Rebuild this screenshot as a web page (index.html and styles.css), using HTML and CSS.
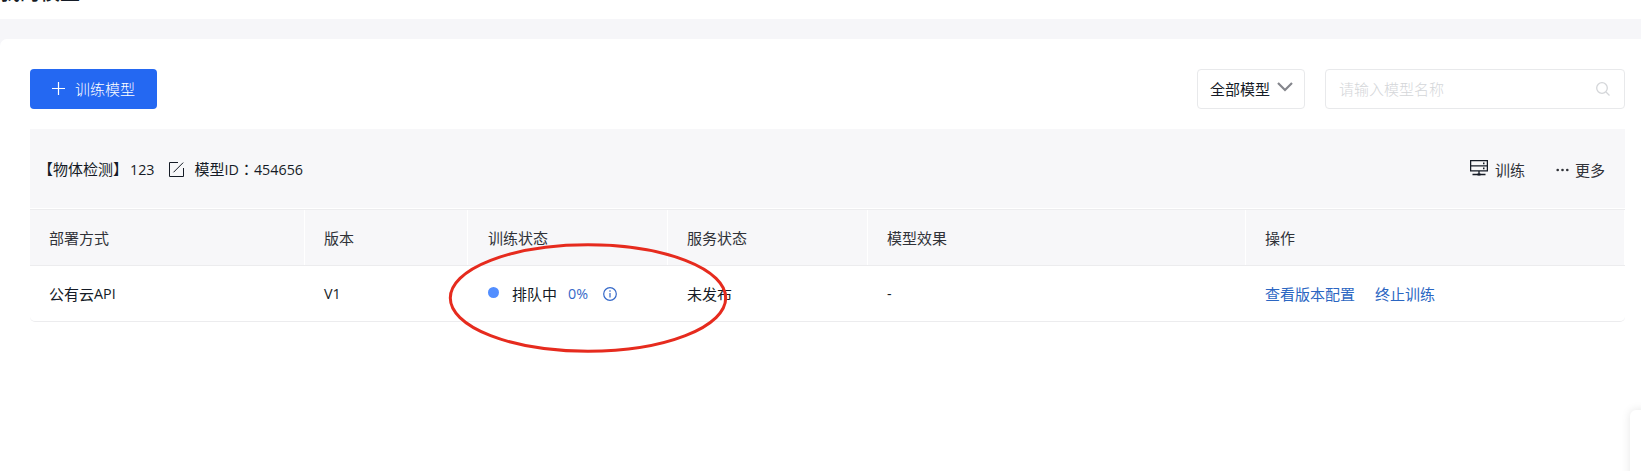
FILE: index.html
```html
<!DOCTYPE html>
<html lang="zh-CN">
<head>
<meta charset="utf-8">
<title>我的模型</title>
<link rel="stylesheet" href="styles.css">
</head>
<body>
<header class="page-header"><h1 class="page-title">我的模型</h1></header>
<main class="card">
  <div class="toolbar">
    <button class="btn-primary">
      <svg width="13" height="13" viewBox="0 0 13 13"><path d="M6.5 0v13M0 6.5h13" stroke="currentColor" stroke-width="1.2"/></svg>
      <span>训练模型</span>
    </button>
    <div class="filters">
      <div class="select">
        <span>全部模型</span>
        <svg class="chevron" width="16" height="10" viewBox="0 0 16 10"><path d="M1 1l7 7 7-7" fill="none" stroke="currentColor" stroke-width="2.2"/></svg>
      </div>
      <div class="search">
        <span>请输入模型名称</span>
        <svg width="14" height="14" viewBox="0 0 14 14" fill="none" stroke="currentColor" stroke-width="1.3"><circle cx="6" cy="6" r="5.3"/><path d="M10 10l3.5 3.5"/></svg>
      </div>
    </div>
  </div>
  <section class="model">
    <div class="model-head">
      <span class="model-name">【物体检测】<span class="latin">123</span></span>
      <svg class="edit" width="15" height="15" viewBox="0 0 15 15" fill="none" stroke="currentColor" stroke-width="1"><path d="M9 .5H.5v14h14V6M4.5 10.3l9.7-9.7"/></svg>
      <span class="model-id">模型<span class="latin">ID</span><span class="colon">：</span><span class="latin">454656</span></span>
      <div class="model-actions">
        <span class="action">
          <svg class="server" width="18" height="17" viewBox="0 0 18 17" fill="none" stroke="currentColor" stroke-width="1.3"><path d="M.6.7h16.8v10.1H.6zM.6 5.9h16.8M9 10.8v3.7M2.5 14.5h13"/><path d="M13 3.3h1.5M13 8.3h1.5M7.5 14.5h3" stroke-width="1.8"/></svg>
          <span>训练</span>
        </span>
        <span class="action more">
          <svg width="13" height="4" viewBox="0 0 13 4" fill="currentColor"><circle cx="1.7" cy="2" r="1.3"/><circle cx="6.5" cy="2" r="1.3"/><circle cx="11.3" cy="2" r="1.3"/></svg>
          <span>更多</span>
        </span>
      </div>
    </div>
    <div class="row row-head">
      <div class="cell">部署方式</div><div class="cell">版本</div><div class="cell">训练状态</div><div class="cell">服务状态</div><div class="cell">模型效果</div><div class="cell">操作</div>
    </div>
    <div class="row row-body">
      <div class="cell">公有云<span class="latin">API</span></div>
      <div class="cell"><span class="latin">V1</span></div>
      <div class="cell status">
        <i class="dot"></i><span>排队中</span><span class="latin percent">0%</span>
        <svg class="info" width="14" height="14" viewBox="0 0 14 14" fill="none" stroke="currentColor" stroke-width="1.2"><circle cx="7" cy="7" r="6.3"/><path d="M7 6v4.5M7 3.3v1.4"/></svg>
        <svg class="marker" width="280" height="112" viewBox="0 0 280 112"><ellipse cx="140" cy="56" rx="137.7" ry="53.2" fill="none" stroke="#e62b1e" stroke-width="3"/></svg>
      </div>
      <div class="cell">未发布</div>
      <div class="cell"><span class="latin">-</span></div>
      <div class="cell links"><a>查看版本配置</a><a>终止训练</a></div>
    </div>
  </section>
</main>
<aside class="float-panel"></aside>
</body>
</html>
```
FILE: styles.css
```css
* { box-sizing: border-box; }
body {
  margin: 0;
  height: 471px;
  overflow: hidden;
  background: #f6f6f9;
  color: #151b26;
  font: 15px/20px "Noto Sans CJK SC", sans-serif;
}
svg { display: block; flex: none; }
.latin { font-family: "Open Sans", sans-serif; font-size: 14.3px; }
.page-header { height: 19px; background: #fff; overflow: hidden; }
.page-title { margin: -19px 0 0; font-size: 20px; line-height: 22px; font-weight: 500; }
.card { margin-top: 20px; height: 432px; padding: 30px 16px 0 30px; background: #fff; border-radius: 7px 0 0 0; }
.toolbar { display: flex; justify-content: space-between; height: 40px; }
.btn-primary {
  display: flex; align-items: center; gap: 10px;
  width: 127px; height: 40px; padding: 0 0 0 22px;
  border: 0; border-radius: 4px; background: #2468f2; color: #fff; font: inherit; font-weight: 300;
}
.btn-primary svg { margin-top: -2px; }
.filters { display: flex; gap: 20px; }
.select, .search { display: flex; align-items: center; height: 40px; border: 1px solid #e8e9eb; border-radius: 4px; background: #fff; }
.select { width: 108px; padding-left: 12px; gap: 7px; }
.chevron { color: #84868c; margin-top: -5px; }
.search { width: 300px; padding: 0 14px 0 13px; justify-content: space-between; color: #d4d6d9; font-weight: 300; }
.model-head { display: flex; align-items: center; height: 79px; margin-top: 20px; padding: 2px 20px 0 8px; background: #f7f7f9; }
.model-name .latin { margin-left: 2px; }
.edit { margin: 0 11px 0 14px; }
.colon { display: inline-block; width: 15px; text-align: center; font-family: "Noto Sans CJK TC", sans-serif; }
.model-actions { display: flex; align-items: center; gap: 31px; margin-left: auto; color: #303238; }
.action { display: flex; align-items: center; gap: 7px; }
.server { margin-top: -3px; color: #151b26; }
.more { gap: 6px; }
.row { display: grid; grid-template-columns: 275px 163px 200px 200px 378px 1fr; }
.row-head { height: 57px; margin-top: 1px; border: solid #ececee; border-width: 1px 0; background: #f7f7f9; color: #303238; }
.row-head .cell { border-right: 1px solid #fff; }
.row-body { height: 56px; border-bottom: 1px solid #ececee; border-radius: 0 0 5px 5px; }
.cell { display: flex; align-items: center; padding-left: 19px; }
.row .cell:nth-child(3) { padding-left: 20px; }
.status { position: relative; }
.dot { width: 11px; height: 11px; margin: -3px 13px 0 0; border-radius: 50%; background: #528eff; }
.percent { margin-left: 11px; color: #3468c8; }
.info { margin-left: 15px; color: #3468c8; }
.marker { position: absolute; left: -20px; top: -24px; z-index: 1; }
.links { gap: 20px; color: #2b66c2; }
.float-panel { position: absolute; left: 1630px; top: 410px; width: 40px; height: 80px; border-radius: 6px; background: #fff; box-shadow: 0 0 10px rgba(0, 0, 0, .1); }
```
